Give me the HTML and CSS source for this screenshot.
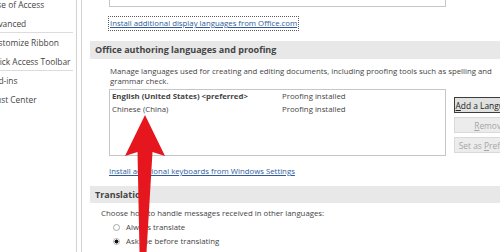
FILE: index.html
```html
<!DOCTYPE html>
<html>
<head>
<meta charset="utf-8">
<link rel="stylesheet" href="styles.css">
</head>
<body>
<div class="app">
  <nav class="nav">
    <ul class="nav-list">
      <li>Ease of Access</li>
      <li class="sep">Advanced</li>
      <li>Customize Ribbon</li>
      <li class="sep">Quick Access Toolbar</li>
      <li>Add-ins</li>
      <li>Trust Center</li>
    </ul>
  </nav>
  <main class="content">
    <div class="indent">
      <div class="top-box"></div>
      <a class="link focus">Install additional display languages from Office.com</a>
    </div>
    <div class="band">Office authoring languages and proofing</div>
    <p class="desc">Manage languages used for creating and editing documents, including proofing tools such as spelling and<br>grammar check.</p>
    <div class="lang-row">
      <div class="list">
        <div class="row bold"><span class="name">English (United States) &lt;preferred&gt;</span><span class="status">Proofing installed</span></div>
        <div class="row"><span class="name">Chinese (China)</span><span class="status">Proofing installed</span></div>
      </div>
      <div class="buttons">
        <button class="btn default"><u>A</u>dd a Language...</button>
        <button class="btn" disabled><u>R</u>emove</button>
        <button class="btn" disabled>Set as <u>P</u>referred</button>
      </div>
    </div>
    <div class="indent link-wrap">
      <a class="link">Install additional keyboards from Windows Settings</a>
    </div>
    <div class="band band2">Translation</div>
    <p class="choose">Choose how to handle messages received in other languages:</p>
    <div class="radio"><span class="circle"></span>Always translate</div>
    <div class="radio checked"><span class="circle"></span>Ask me before translating</div>
  </main>
</div>
<svg class="arrow" width="500" height="252" viewBox="0 0 500 252">
  <polygon points="145,115 165,156 152.5,152 146.5,252 139.5,252 137.5,152 125,156" fill="#e5161e"/>
</svg>
</body>
</html>
```
FILE: styles.css
```css
html, body {
  margin: 0;
  padding: 0;
}
body {
  width: 500px;
  height: 252px;
  overflow: hidden;
  background: #fff;
  font-family: "Open Sans", "Noto Sans", sans-serif;
  font-size: 7.8px;
  color: #444;
  position: relative;
}
.app {
  display: flex;
  height: 252px;
}
.nav {
  width: 76px;
  flex: none;
  border-right: 1px solid #d2d2d2;
  margin-right: 4px;
  overflow: hidden;
}
.nav-list {
  list-style: none;
  margin: -5px 0 0 0;
  padding: 0;
}
.nav-list li {
  height: 19px;
  line-height: 19px;
  margin-left: -12px;
  white-space: nowrap;
  color: #444;
  font-size: 8.4px;
  box-sizing: border-box;
}
.nav-list li.sep {
  border-bottom: 1px solid #dcdcdc;
  margin-right: 3px;
}
.content {
  flex: 1;
  border-left: 1px solid #d2d2d2;
  overflow: hidden;
  min-width: 0;
}
.indent {
  padding-left: 27px;
}
.top-box {
  width: 337px;
  height: 27px;
  margin-top: -20px;
  box-sizing: border-box;
  border: 1px solid #c6c6c6;
}
.link {
  display: inline-block;
  color: #2f5b9c;
  text-decoration: underline;
  white-space: nowrap;
  line-height: 13px;
}
.link.focus {
  margin-top: 9px;
  margin-left: -1px;
  padding: 0 1px;
  border: 1px dotted #5a5a5a;
}
.band {
  margin: 10px 0 0 8px;
  height: 18px;
  line-height: 18px;
  padding-left: 5px;
  background: #e8e8e8;
  font-weight: bold;
  font-size: 9px;
  color: #444;
  white-space: nowrap;
}
.desc {
  margin: 7px 0 0 0;
  padding-left: 28px;
  line-height: 10px;
  white-space: nowrap;
}
.lang-row {
  display: flex;
  gap: 8px;
  margin-top: 3px;
  padding-left: 27px;
}
.list {
  width: 337px;
  height: 67px;
  flex: none;
  box-sizing: border-box;
  border: 1px solid #c6c6c6;
  padding-left: 2px;
}
.row {
  display: flex;
  line-height: 13px;
  white-space: nowrap;
}
.row.bold .name {
  font-weight: bold;
}
.row .name {
  width: 170px;
  flex: none;
}
.buttons {
  display: flex;
  flex-direction: column;
  gap: 4px;
  margin-top: 8px;
}
.btn {
  width: 72px;
  height: 16px;
  padding: 0;
  font-family: inherit;
  font-size: 8.4px;
  background: #e1e1e1;
  border: 1px solid #adadad;
  color: #222;
  white-space: nowrap;
  line-height: 13px;
}
.btn.default {
  border-color: #3c3c3c;
}
.btn:disabled {
  background: #ececec;
  border-color: #d9d9d9;
  color: #a6a6a6;
}
.link-wrap {
  margin-top: 9px;
}
.band2 {
  margin-top: 8px;
  height: 17px;
  line-height: 17px;
}
.choose {
  margin: 4px 0 0 0;
  padding-left: 19px;
  line-height: 12px;
  white-space: nowrap;
}
.radio {
  display: flex;
  align-items: center;
  gap: 6px;
  padding-left: 31px;
  height: 14px;
  margin-top: 1px;
  white-space: nowrap;
}
.radio + .radio {
  margin-top: 0;
}
.circle {
  width: 7px;
  height: 7px;
  box-sizing: border-box;
  border-radius: 50%;
  border: 1px solid #a8a8a8;
  background: #fff;
  flex: none;
}
.radio.checked .circle {
  border-color: #b0b0b0;
  background: radial-gradient(circle, #111 0 1.8px, #fff 2.2px);
}
.arrow {
  position: absolute;
  left: 0;
  top: 0;
  pointer-events: none;
}
```
